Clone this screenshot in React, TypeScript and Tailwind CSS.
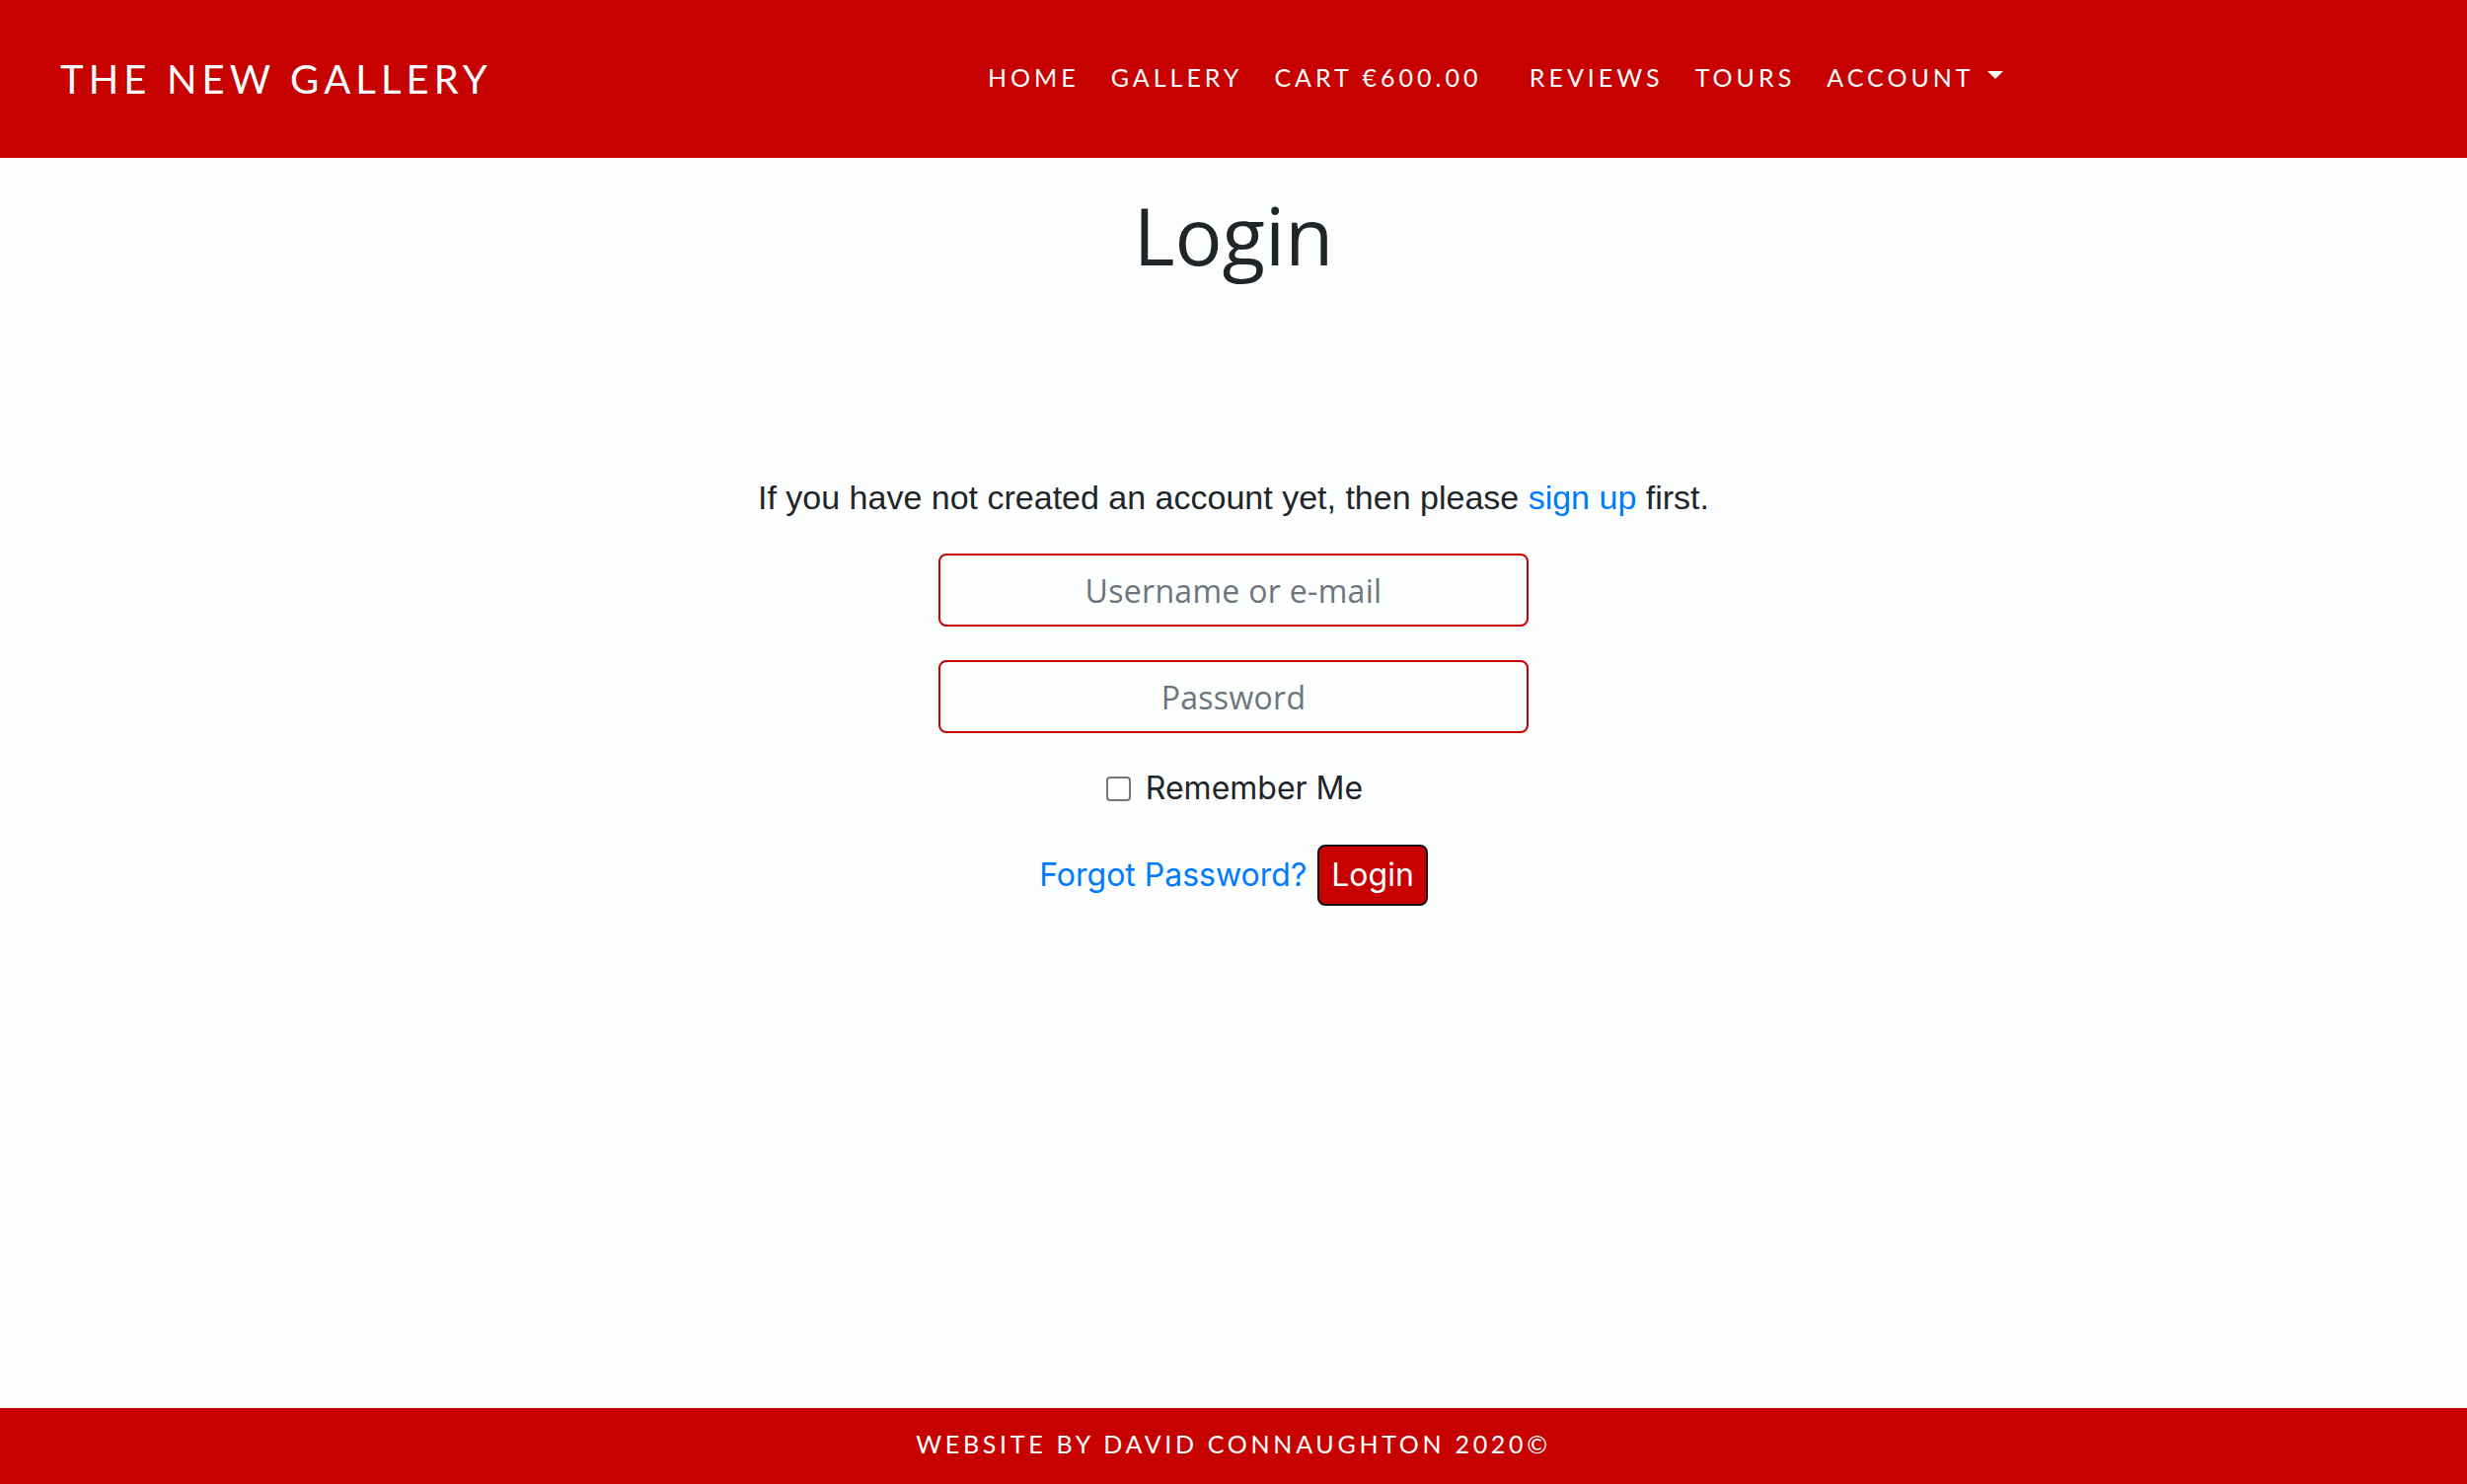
import React from "react";

const navFont = { fontFamily: "Lato, 'Open Sans', sans-serif" } as const;
const openFont = { fontFamily: "'Open Sans', Lato, sans-serif" } as const;

function NavLink({ children, extra }: { children: React.ReactNode; extra?: boolean }) {
  return (
    <a
      className={
        extra
          ? "pl-4 pr-[22px] text-[25px] leading-[38px] tracking-[4px] text-white uppercase whitespace-nowrap"
          : "px-4 text-[25px] leading-[38px] tracking-[4px] text-white uppercase whitespace-nowrap"
      }
      style={navFont}
      href="#"
    >
      {children}
    </a>
  );
}

export default function App() {
  return (
    <div className="min-h-screen flex flex-col bg-[#fbfefc]">
      <nav className="h-[160px] bg-[#c70000] flex items-center pl-[61px]">
        <a className="text-[40px] leading-[60px] tracking-[5.1px] text-white whitespace-nowrap" style={navFont} href="#">
          THE NEW GALLERY
        </a>
        <div className="flex items-center ml-[486px] -mt-[4px]">
          <NavLink>Home</NavLink>
          <NavLink>Gallery</NavLink>
          <NavLink extra>Cart €600.00&nbsp;</NavLink>
          <NavLink>Reviews</NavLink>
          <NavLink>Tours</NavLink>
          <a className="pl-4 flex items-center text-[25px] leading-[38px] tracking-[4px] text-white whitespace-nowrap" style={navFont} href="#">
            ACCOUNT
            <span className="ml-[13px] -mt-[5px] w-0 h-0 border-l-[8px] border-r-[8px] border-t-[8px] border-l-transparent border-r-transparent border-t-white" />
          </a>
        </div>
      </nav>

      <main className="flex-1 flex flex-col items-center">
        <h1 className="mt-[30px] text-[80px] leading-[96px] text-[#212529]" style={openFont}>
          Login
        </h1>
        <p className="mt-[194px] text-[34px] leading-[48px] text-[#212529]" style={{ fontFamily: "'Liberation Sans', Arial, sans-serif" }}>
          If you have not created an account yet, then please <a href="#" className="text-[#007bff]">sign up</a> first.
        </p>
        <input
          className="mt-[33px] w-[598px] h-[74px] rounded-[8px] border-2 border-[#c80000] bg-[#fbfefc] text-center text-[32px] tracking-[0.3px] placeholder:text-[#6c757d] outline-none"
          style={openFont}
          placeholder="Username or e-mail"
        />
        <input
          className="mt-[34px] w-[598px] h-[74px] rounded-[8px] border-2 border-[#c80000] bg-[#fbfefc] text-center text-[32px] tracking-[0.3px] placeholder:text-[#6c757d] outline-none"
          style={openFont}
          type="password"
          placeholder="Password"
        />
        <label className="mt-[32px] ml-[2px] flex items-center h-[48px] text-[32px] text-[#212529]" style={{ fontFamily: "Inter, Roboto, sans-serif" }}>
          <span className="w-[25px] h-[25px] border-2 border-[#767676] rounded-[4px] bg-white mr-[15px]" />
          Remember Me
        </label>
        <div className="mt-[33px] flex items-center gap-[11px]" style={{ fontFamily: "Inter, Roboto, sans-serif" }}>
          <a href="#" className="text-[32px] text-[#007bff] leading-[48px]">Forgot Password?</a>
          <button className="h-[62px] px-[12px] rounded-[8px] border-2 border-[#111] bg-[#c80000] text-white text-[32px] leading-[48px]">
            Login
          </button>
        </div>
      </main>

      <footer className="h-[77px] bg-[#c70000] flex items-center justify-center">
        <span className="-mt-[3px] text-[25px] tracking-[3.7px] text-white" style={navFont}>
          WEBSITE BY DAVID CONNAUGHTON 2020©
        </span>
      </footer>
    </div>
  );
}
